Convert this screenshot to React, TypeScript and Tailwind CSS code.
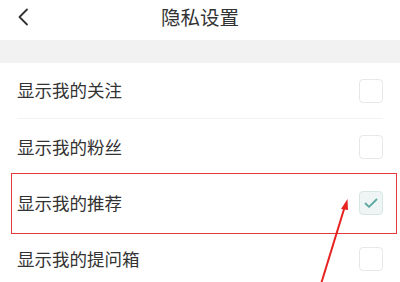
import React from "react";

const rows = [
  { label: "显示我的关注", checked: false },
  { label: "显示我的粉丝", checked: false },
  { label: "显示我的推荐", checked: true },
  { label: "显示我的提问箱", checked: false },
];

function Checkbox({ checked }: { checked: boolean }) {
  return (
    <div
      className={`flex h-[24px] w-[24px] items-center justify-center rounded-[4px] border ${
        checked ? "border-[#d6e6e4] bg-[#eef5f4]" : "border-[#e8e8e8] bg-white"
      }`}
    >
      {checked ? (
        <svg width="16" height="16" viewBox="0 0 16 16" fill="none">
          <path d="M2.5 8.5l3.5 3.3 7.5-7.3" stroke="#5aa7a1" strokeWidth="1.8" strokeLinecap="round" strokeLinejoin="round" />
        </svg>
      ) : null}
    </div>
  );
}

export default function App() {
  return (
    <div
      className="relative h-[282px] w-[400px] overflow-hidden bg-white text-[#333]"
      style={{ fontFamily: '"Noto Sans CJK SC", "Noto Sans", sans-serif' }}
    >
      <div className="relative flex h-[40px] items-start justify-center pt-[6px]">
        <svg className="absolute left-[15px] top-[8px]" width="16" height="18" viewBox="0 0 16 18" fill="none">
          <path d="M12 1.5L4.5 9l7.5 7.5" stroke="#333" strokeWidth="1.8" strokeLinecap="round" strokeLinejoin="round" />
        </svg>
        <span className="text-[19.5px] leading-[22px]">隐私设置</span>
      </div>
      <div className="h-[23px] bg-[#f2f2f2]" />
      <div>
        {rows.map((row, i) => (
          <div key={row.label} className="flex h-[56px] items-center pl-[17px] pr-[17px]">
            <div
              className={`flex h-full flex-1 items-center justify-between ${
                i === 0 ? "border-b border-[#f3f3f3]" : ""
              }`}
            >
              <span className="text-[17.5px]">{row.label}</span>
              <Checkbox checked={row.checked} />
            </div>
          </div>
        ))}
      </div>

      {/* annotation overlay */}
      <div className="absolute left-[11px] top-[173px] h-[61px] w-[386px] border-[1.5px] border-[#e53a3a]" />
      <svg className="absolute left-0 top-0" width="400" height="282" viewBox="0 0 400 282" fill="none">
        <path d="M321 284 L345 206" stroke="#e8221f" strokeWidth="2" />
        <path d="M347.5 199 L341 209 L348 210 Z" fill="#e8221f" />
      </svg>
    </div>
  );
}
